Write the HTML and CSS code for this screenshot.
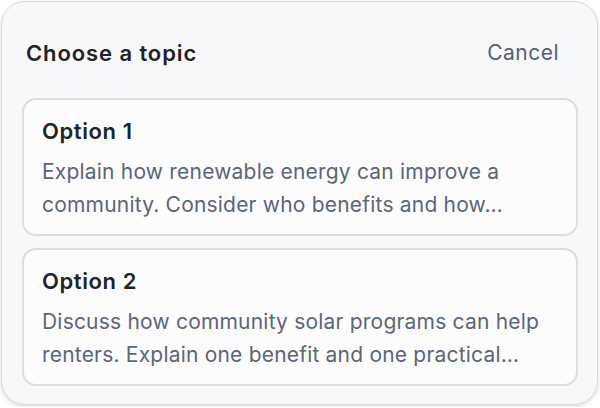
FILE: index.html
```html
<!doctype html>
<html lang="en">
<head>
    <meta charset="UTF-8">
    <title>Choose a topic</title>
    <link rel="stylesheet" href="styles.css">
</head>
<body>
    <div class="topic-sheet">
        <div class="topic-header">
            <h2 class="topic-title">Choose a topic</h2>
            <button class="topic-cancel">Cancel</button>
        </div>
        <div class="topic-list">
            <div class="topic-option">
                <div class="option-name">Option 1</div>
                <div class="option-desc">Explain how renewable energy can improve a community. Consider who benefits and how…</div>
            </div>
            <div class="topic-option">
                <div class="option-name">Option 2</div>
                <div class="option-desc">Discuss how community solar programs can help renters. Explain one benefit and one practical…</div>
            </div>
        </div>
    </div>
</body>
</html>
```

FILE: styles.css
```css
html, body {
    margin: 0;
    padding: 0;
    background: #fff;
}
body {
    font-family: Inter, "Noto Sans", sans-serif;
    padding: 1px 2px 2px 1px;
}
.topic-sheet {
    box-sizing: border-box;
    height: 404px;
    background: #f7f8fa;
    border: 1px solid #d8dadd;
    border-radius: 24px;
    box-shadow: 0 2px 4px rgba(0, 0, 0, 0.12);
    padding: 0 19px 0 20px;
}
.topic-header {
    box-sizing: border-box;
    display: flex;
    justify-content: space-between;
    align-items: center;
    height: 96px;
    padding: 5px 19px 0 4px;
}
.topic-title {
    margin: 0;
    font-size: 22px;
    font-weight: 600;
    color: #1f2329;
    letter-spacing: 0.9px;
}
.topic-cancel {
    border: none;
    background: none;
    padding: 0;
    font-family: inherit;
    font-size: 21px;
    letter-spacing: 0.5px;
    color: #566171;
    cursor: pointer;
}
.topic-list {
    display: flex;
    flex-direction: column;
    gap: 12px;
}
.topic-option {
    background: #fcfcfd;
    border: 2px solid #dcdee1;
    border-radius: 14px;
    padding: 17px 18px 13px 18px;
}
.option-name {
    font-size: 22px;
    font-weight: 600;
    color: #1f2329;
    line-height: 28px;
    letter-spacing: 0.6px;
}
.option-desc {
    margin-top: 10px;
    font-size: 21px;
    line-height: 33px;
    letter-spacing: 0.2px;
    color: #5b6676;
}
```
